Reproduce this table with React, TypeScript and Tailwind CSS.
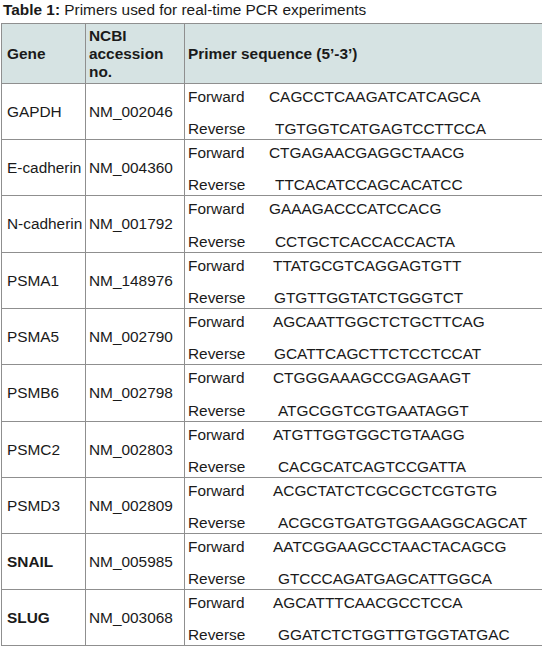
const rows = [
  { gene: "GAPDH", acc: "NM_002046", fwd: "CAGCCTCAAGATCATCAGCA", rev: "TGTGGTCATGAGTCCTTCCA", fi: "pl-0", ri: "pl-[6px]", h: "h-[56px]" },
  { gene: "E-cadherin", acc: "NM_004360", fwd: "CTGAGAACGAGGCTAACG", rev: "TTCACATCCAGCACATCC", fi: "pl-0", ri: "pl-[6px]", h: "h-[56px]" },
  { gene: "N-cadherin", acc: "NM_001792", fwd: "GAAAGACCCATCCACG", rev: "CCTGCTCACCACCACTA", fi: "pl-0", ri: "pl-[6px]", h: "h-[57px]" },
  { gene: "PSMA1", acc: "NM_148976", fwd: "TTATGCGTCAGGAGTGTT", rev: "GTGTTGGTATCTGGGTCT", fi: "pl-[4px]", ri: "pl-[5px]", h: "h-[56px]" },
  { gene: "PSMA5", acc: "NM_002790", fwd: "AGCAATTGGCTCTGCTTCAG", rev: "GCATTCAGCTTCTCCTCCAT", fi: "pl-[4px]", ri: "pl-[5px]", h: "h-[56px]" },
  { gene: "PSMB6", acc: "NM_002798", fwd: "CTGGGAAAGCCGAGAAGT", rev: "ATGCGGTCGTGAATAGGT", fi: "pl-[4px]", ri: "pl-[9px]", h: "h-[57px]" },
  { gene: "PSMC2", acc: "NM_002803", fwd: "ATGTTGGTGGCTGTAAGG", rev: "CACGCATCAGTCCGATTA", fi: "pl-[4px]", ri: "pl-[9px]", h: "h-[56px]" },
  { gene: "PSMD3", acc: "NM_002809", fwd: "ACGCTATCTCGCGCTCGTGTG", rev: "ACGCGTGATGTGGAAGGCAGCAT", fi: "pl-[4px]", ri: "pl-[9px]", h: "h-[56px]" },
  { gene: "SNAIL", acc: "NM_005985", fwd: "AATCGGAAGCCTAACTACAGCG", rev: "GTCCCAGATGAGCATTGGCA", fi: "pl-[4px]", ri: "pl-[9px]", h: "h-[56px]", bold: true },
  { gene: "SLUG", acc: "NM_003068", fwd: "AGCATTTCAACGCCTCCA", rev: "GGATCTCTGGTTGTGGTATGAC", fi: "pl-[4px]", ri: "pl-[9px]", h: "h-[56px]", bold: true },
];

const App = () => {
  return (
    <div className="w-[542px] h-[646px] bg-white text-[15.4px] leading-[18px] text-[#1a1a1a] font-[family-name:'Liberation_Sans',Arial,sans-serif] overflow-hidden">
      <p className="h-[23px] pl-[3px] pt-[1px]">
        <span className="font-bold">Table 1:</span> Primers used for real-time PCR experiments
      </p>
      <div className="ml-[1px] border-l border-t border-[#8f8f8f]">
        <div className="grid grid-cols-[84px_99px_1fr] h-[60px] bg-[#d6e3e3] border-b border-[#8f8f8f] font-bold">
          <div className="border-r border-[#8f8f8f] flex items-center pl-[5px]">Gene</div>
          <div className="border-r border-[#8f8f8f] flex items-center pl-[3px]">
            <span>
              NCBI
              <br />
              accession
              <br />
              no.
            </span>
          </div>
          <div className="flex items-center pl-[3px]">Primer sequence (5’-3’)</div>
        </div>
        {rows.map((r) => (
          <div
            key={r.gene}
            className={`grid grid-cols-[84px_99px_1fr] border-b border-[#8f8f8f] ${r.h}`}
          >
            <div className={`border-r border-[#8f8f8f] flex items-center pl-[5px] ${r.bold ? "font-bold" : ""}`}>
              {r.gene}
            </div>
            <div className="border-r border-[#8f8f8f] flex items-center pl-[3px]">{r.acc}</div>
            <div className="flex flex-col justify-between pt-[4px] pb-[1px] pl-[3px]">
              <div className="flex">
                <span className="w-[81px] shrink-0">Forward</span>
                <span className={r.fi}>{r.fwd}</span>
              </div>
              <div className="flex">
                <span className="w-[81px] shrink-0">Reverse</span>
                <span className={r.ri}>{r.rev}</span>
              </div>
            </div>
          </div>
        ))}
      </div>
    </div>
  );
};

export default App;
